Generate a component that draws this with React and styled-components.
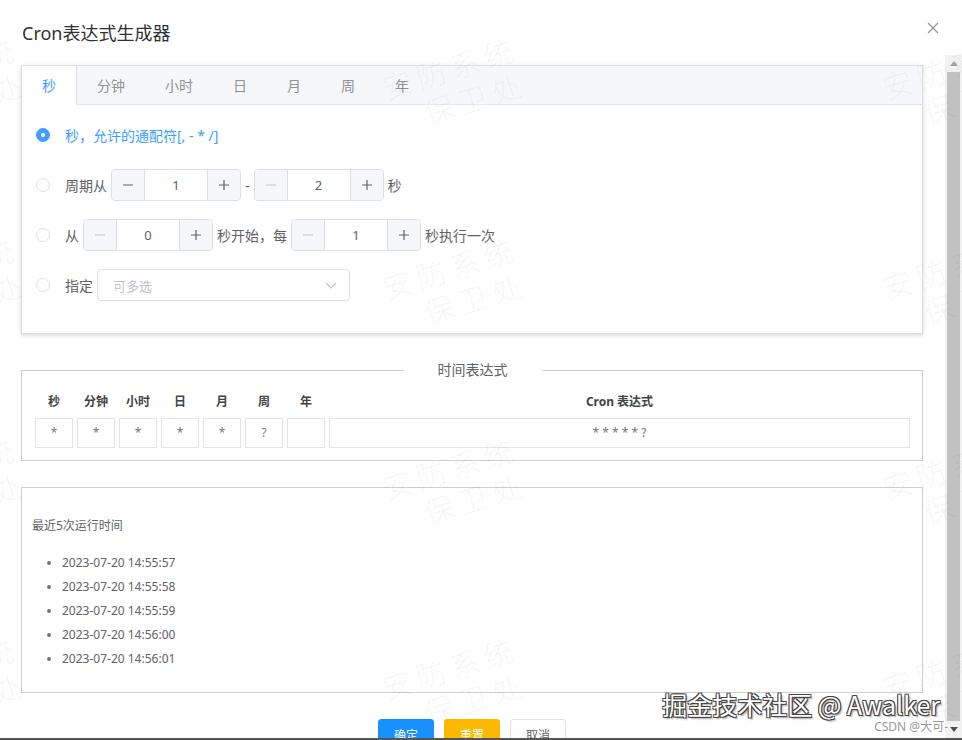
import React from "react";
import styled, { createGlobalStyle } from "styled-components";

const GlobalStyle = createGlobalStyle`
  html, body {
    margin: 0;
    padding: 0;
    background: #fff;
  }
  body {
    font-family: "Noto Sans", "Noto Sans CJK SC", sans-serif;
  }
`;

const Page = styled.div`
  position: relative;
  width: 962px;
  height: 740px;
  overflow: hidden;
  display: flex;
  flex-direction: column;
  background: #fff;
  border-bottom: 2px solid #555;
  box-sizing: border-box;
`;

const Header = styled.div`
  height: 55px;
  flex-shrink: 0;
  box-sizing: border-box;
  padding: 20px 23px 0 22px;
  display: flex;
  justify-content: space-between;
  align-items: flex-start;
`;

const Title = styled.span`
  font-size: 18px;
  line-height: 26px;
  color: #303133;
`;

const Close = styled.span`
  display: flex;
  margin-top: 2px;
  color: #909399;
`;

const Body = styled.div`
  flex: 1;
  min-height: 0;
  display: flex;
`;

const Content = styled.div`
  flex: 1;
  padding: 10px 22px 0 21px;
  display: flex;
  flex-direction: column;
  overflow: hidden;
`;

const Scrollbar = styled.div`
  width: 17px;
  flex-shrink: 0;
  background: #f1f1f1;
  display: flex;
  flex-direction: column;
  align-items: center;
`;

const ScrollArrow = styled.div`
  height: 17px;
  display: flex;
  align-items: center;
  justify-content: center;
`;

const Thumb = styled.div`
  flex: 1;
  width: 13px;
  background: #c1c1c1;
`;

const Card = styled.div`
  border: 1px solid #dcdfe6;
  background: #fff;
  box-shadow: 0 2px 4px rgba(0, 0, 0, 0.12), 0 0 6px rgba(0, 0, 0, 0.04);
`;

const TabBar = styled.div`
  height: 38px;
  display: flex;
  align-items: flex-start;
  background: #f5f7fa;
  border-bottom: 1px solid #e4e7ed;
`;

const Tab = styled.div`
  height: 39px;
  line-height: 39px;
  padding: 0 20px;
  font-size: 14px;
  color: ${(p) => (p.$active ? "#409eff" : "#909399")};
  background: ${(p) => (p.$active ? "#fff" : "transparent")};
  border-right: 1px solid ${(p) => (p.$active ? "#dcdfe6" : "transparent")};
  margin-right: ${(p) => (p.$active ? "0" : "-1px")};
`;

const TabBody = styled.div`
  padding: 14px 15px 32px 14px;
  display: flex;
  flex-direction: column;
  gap: 18px;
`;

const Row = styled.div`
  height: 32px;
  display: flex;
  align-items: center;
  font-size: 14px;
  color: ${(p) => (p.$active ? "#409eff" : "#606266")};
`;

const Radio = styled.span`
  width: 14px;
  height: 14px;
  box-sizing: border-box;
  border-radius: 50%;
  border: 1px solid ${(p) => (p.$checked ? "#409eff" : "#dcdfe6")};
  background: ${(p) => (p.$checked ? "#409eff" : "#fff")};
  display: flex;
  align-items: center;
  justify-content: center;
  margin-right: 15px;
  &::after {
    content: "";
    width: 4px;
    height: 4px;
    border-radius: 50%;
    background: #fff;
  }
`;

const NumberBox = styled.div`
  display: flex;
  width: 130px;
  height: 32px;
  box-sizing: border-box;
  border: 1px solid #dcdfe6;
  border-radius: 4px;
  overflow: hidden;
  margin: 0 4px;
  background: #fff;
`;

const StepButton = styled.span`
  width: 32px;
  flex-shrink: 0;
  display: flex;
  align-items: center;
  justify-content: center;
  background: #f5f7fa;
  color: ${(p) => (p.$disabled ? "#c0c4cc" : "#606266")};
  border-right: ${(p) => (p.$side === "left" ? "1px solid #dcdfe6" : "none")};
  border-left: ${(p) => (p.$side === "right" ? "1px solid #dcdfe6" : "none")};
`;

const NumberValue = styled.span`
  flex: 1;
  text-align: center;
  line-height: 30px;
  font-size: 13px;
  color: #606266;
`;

const Select = styled.div`
  width: 253px;
  height: 32px;
  box-sizing: border-box;
  border: 1px solid #dcdfe6;
  border-radius: 4px;
  margin-left: 4px;
  padding: 0 11px 0 15px;
  display: flex;
  align-items: center;
  justify-content: space-between;
  font-size: 13px;
  color: #c0c4cc;
`;

const Fieldset = styled.fieldset`
  margin: 26px 0 0;
  padding: 11px 12px 12px 13px;
  border: 1px solid #cfcfcf;
  min-width: 0;
`;

const Legend = styled.legend`
  margin: 0 auto;
  padding: 0 34px;
  font-size: 14px;
  line-height: 20px;
  color: #606266;
`;

const ExprGrid = styled.div`
  display: grid;
  grid-template-columns: repeat(7, 38px) 1fr;
  column-gap: 4px;
  row-gap: 5px;
`;

const HeadCell = styled.div`
  height: 22px;
  line-height: 22px;
  text-align: center;
  font-size: 12px;
  font-weight: bold;
  color: #444;
`;

const ValueCell = styled.div`
  height: 30px;
  box-sizing: border-box;
  border: 1px solid #e4e4e4;
  line-height: 28px;
  text-align: center;
  font-size: 12px;
  color: #777;
`;

const RunBox = styled.div`
  margin-top: 26px;
  border: 1px solid #cfcfcf;
  padding: 28px 10px 21px;
  font-size: 12px;
  color: #606266;
`;

const RunTitle = styled.div`
  line-height: 20px;
`;

const RunList = styled.ul`
  margin: 15px 0 0;
  padding-left: 30px;
`;

const RunItem = styled.li`
  line-height: 24px;
  &::marker {
    color: #777;
  }
`;

const Footer = styled.div`
  margin-top: 26px;
  display: flex;
  justify-content: center;
  gap: 10px;
`;

const Button = styled.button`
  height: 32px;
  padding: 0 15px;
  border-radius: 3px;
  font-family: inherit;
  font-size: 12px;
  border: 1px solid ${(p) => p.$border || p.$bg || "#dcdfe6"};
  background: ${(p) => p.$bg || "#fff"};
  color: ${(p) => (p.$bg ? "#fff" : "#606266")};
`;

const WatermarkLayer = styled.div`
  position: absolute;
  left: -95px;
  top: 48px;
  display: grid;
  grid-template-columns: repeat(3, 500px);
  grid-auto-rows: 200px;
  pointer-events: none;
`;

const WatermarkTile = styled.div`
  transform: translate(2px, 18px) rotate(-17deg);
  transform-origin: 0 50%;
  font-size: 30px;
  line-height: 36px;
  letter-spacing: 5px;
  color: rgba(0, 0, 0, 0.055);
  font-family: "Noto Sans CJK SC", sans-serif;
  font-weight: 300;
`;

const WatermarkLine = styled.div`
  padding-left: ${(p) => p.$indent || 0}px;
  white-space: nowrap;
`;

const Credit = styled.div`
  position: absolute;
  right: 22px;
  bottom: 3px;
  display: flex;
  flex-direction: column;
  align-items: flex-end;
  pointer-events: none;
`;

const CreditMain = styled.div`
  font-size: 25px;
  line-height: 30px;
  color: #fff;
  font-family: "Noto Sans CJK SC", sans-serif;
  text-shadow: 1px 1px 0 #444, -1px -1px 0 #444, 1px -1px 0 #444, -1px 1px 0 #444,
    2px 2px 2px rgba(0, 0, 0, 0.4);
`;

const CreditSub = styled.div`
  font-size: 12px;
  line-height: 16px;
  color: #999;
  margin-right: -8px;
  text-shadow: 0 0 2px #fff;
`;

const Minus = () => (
  <svg width="12" height="12" viewBox="0 0 12 12">
    <line x1="1" y1="6" x2="11" y2="6" stroke="currentColor" strokeWidth="1.2" />
  </svg>
);

const Plus = () => (
  <svg width="12" height="12" viewBox="0 0 12 12">
    <line x1="1" y1="6" x2="11" y2="6" stroke="currentColor" strokeWidth="1.2" />
    <line x1="6" y1="1" x2="6" y2="11" stroke="currentColor" strokeWidth="1.2" />
  </svg>
);

const NumberInput = ({ value, minusDisabled }) => (
  <NumberBox>
    <StepButton $side="left" $disabled={minusDisabled}>
      <Minus />
    </StepButton>
    <NumberValue>{value}</NumberValue>
    <StepButton $side="right">
      <Plus />
    </StepButton>
  </NumberBox>
);

const tabs = ["秒", "分钟", "小时", "日", "月", "周", "年"];
const fields = ["*", "*", "*", "*", "*", "?", ""];
const runs = [
  "2023-07-20 14:55:57",
  "2023-07-20 14:55:58",
  "2023-07-20 14:55:59",
  "2023-07-20 14:56:00",
  "2023-07-20 14:56:01",
];

const App = () => {
  return (
    <>
      <GlobalStyle />
      <Page>
        <Header>
          <Title>Cron表达式生成器</Title>
          <Close>
            <svg width="12" height="12" viewBox="0 0 12 12">
              <path d="M1 1L11 11M11 1L1 11" stroke="currentColor" strokeWidth="1.2" />
            </svg>
          </Close>
        </Header>
        <Body>
          <Content>
            <Card>
              <TabBar>
                {tabs.map((t, i) => (
                  <Tab key={t} $active={i === 0}>
                    {t}
                  </Tab>
                ))}
              </TabBar>
              <TabBody>
                <Row $active>
                  <Radio $checked />
                  秒，允许的通配符[, - * /]
                </Row>
                <Row>
                  <Radio />
                  周期从
                  <NumberInput value={1} />
                  -
                  <NumberInput value={2} minusDisabled />
                  秒
                </Row>
                <Row>
                  <Radio />
                  从
                  <NumberInput value={0} minusDisabled />
                  秒开始，每
                  <NumberInput value={1} minusDisabled />
                  秒执行一次
                </Row>
                <Row>
                  <Radio />
                  指定
                  <Select>
                    可多选
                    <svg width="14" height="14" viewBox="0 0 14 14">
                      <path d="M2 5L7 10L12 5" fill="none" stroke="#c0c4cc" strokeWidth="1.2" />
                    </svg>
                  </Select>
                </Row>
              </TabBody>
            </Card>

            <Fieldset>
              <Legend>时间表达式</Legend>
              <ExprGrid>
                {tabs.map((t) => (
                  <HeadCell key={t}>{t}</HeadCell>
                ))}
                <HeadCell>Cron 表达式</HeadCell>
                {fields.map((f, i) => (
                  <ValueCell key={i}>{f}</ValueCell>
                ))}
                <ValueCell>* * * * * ?</ValueCell>
              </ExprGrid>
            </Fieldset>

            <RunBox>
              <RunTitle>最近5次运行时间</RunTitle>
              <RunList>
                {runs.map((r) => (
                  <RunItem key={r}>{r}</RunItem>
                ))}
              </RunList>
            </RunBox>

            <Footer>
              <Button $bg="#1890ff">确定</Button>
              <Button $bg="#ffb800">重置</Button>
              <Button>取消</Button>
            </Footer>
          </Content>
          <Scrollbar>
            <ScrollArrow>
              <svg width="8" height="5" viewBox="0 0 8 5">
                <path d="M0 5L4 0L8 5Z" fill="#a3a3a3" />
              </svg>
            </ScrollArrow>
            <Thumb />
            <ScrollArrow>
              <svg width="8" height="5" viewBox="0 0 8 5">
                <path d="M0 0L8 0L4 5Z" fill="#505050" />
              </svg>
            </ScrollArrow>
          </Scrollbar>
        </Body>

        <WatermarkLayer>
          {Array.from({ length: 12 }).map((_, i) => (
            <WatermarkTile key={i}>
              <WatermarkLine>安防系统</WatermarkLine>
              <WatermarkLine $indent={32}>保卫处</WatermarkLine>
            </WatermarkTile>
          ))}
        </WatermarkLayer>

        <Credit>
          <CreditMain>掘金技术社区 @ Awalker</CreditMain>
          <CreditSub>CSDN @大可-</CreditSub>
        </Credit>
      </Page>
    </>
  );
};

export default App;
